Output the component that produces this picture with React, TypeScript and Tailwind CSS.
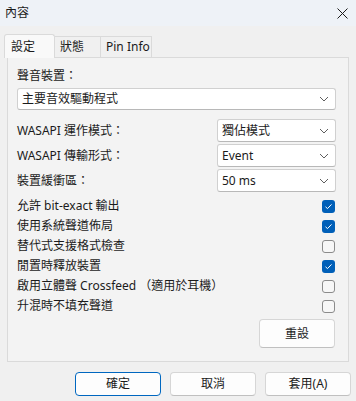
import React, { useState } from "react";

const fontStack = "font-['Noto_Sans','Noto_Sans_CJK_TC',sans-serif]";

const Chevron = () => (
  <svg width="10" height="6" viewBox="0 0 10 6" className="shrink-0">
    <path d="M1 1 L5 5 L9 1" fill="none" stroke="#5f5f5f" strokeWidth="1" />
  </svg>
);

const Select = ({ value, className }: { value: string; className?: string }) => (
  <div
    className={`flex items-center justify-between bg-white border border-[#d0d0d0] border-b-[#b8b8b8] rounded-[3px] pl-[4px] pr-[6px] ${className ?? ""}`}
  >
    <span className="text-[12px] leading-[16px] text-[#1b1b1b]">{value}</span>
    <Chevron />
  </div>
);

const Checkbox = ({ checked }: { checked: boolean }) =>
  checked ? (
    <div className="w-[13px] h-[13px] rounded-[3px] bg-[#005fb8] flex items-center justify-center">
      <svg width="9" height="7" viewBox="0 0 9 7">
        <path d="M1.5 3.8 L3.5 5.6 L7.5 1.4" fill="none" stroke="#ffffff" strokeWidth="1" />
      </svg>
    </div>
  ) : (
    <div className="w-[13px] h-[13px] rounded-[3px] border border-[#8b8b8b] bg-[#f7f7f7]" />
  );

const options = [
  { label: "允許 bit-exact 輸出", checked: true },
  { label: "使用系統聲道佈局", checked: true },
  { label: "替代式支援格式檢查", checked: false },
  { label: "閒置時釋放裝置", checked: true },
  { label: "啟用立體聲 Crossfeed （適用於耳機）", checked: false },
  { label: "升混時不填充聲道", checked: false },
];

const App: React.FC = () => {
  const [tab] = useState("設定");
  const tabs = [
    { name: "設定", w: "w-[51px]" },
    { name: "狀態", w: "w-[46px]" },
    { name: "Pin Info", w: "w-[51px]" },
  ];

  return (
    <div className={`w-[356px] h-[401px] bg-[#f0f0f0] text-[#1b1b1b] overflow-hidden ${fontStack}`}>
      {/* title bar */}
      <div className="h-[26px] bg-[#eef2f7] flex items-center justify-between pl-[5px] pr-[8px]">
        <span className="text-[12px] leading-[16px]">內容</span>
        <svg width="11" height="11" viewBox="0 0 11 11">
          <path d="M0.5 0.5 L10.5 10.5 M10.5 0.5 L0.5 10.5" stroke="#1b1b1b" strokeWidth="1" />
        </svg>
      </div>

      {/* tabs */}
      <div className="flex items-end pl-[4px] mt-[8px] h-[23px]">
        {tabs.map((t) =>
          t.name === tab ? (
            <div
              key={t.name}
              className={`${t.w} h-[24px] -mb-[1px] relative z-10 bg-[#f9f9f9] border border-b-0 border-[#dadada] rounded-t-[3px] flex items-center pl-[6px] text-[12px] leading-[16px]`}
            >
              {t.name}
            </div>
          ) : (
            <div
              key={t.name}
              className={`${t.w} h-[21px] bg-[#f0f0f0] border border-b-0 border-l-0 border-[#dadada] flex items-center pl-[5px] text-[12px] leading-[16px]`}
            >
              {t.name}
            </div>
          )
        )}
      </div>

      {/* panel */}
      <div className="ml-[7px] w-[342px] h-[305px] border border-[#dadada] bg-[#f3f3f3] pl-[9px] pr-[12px] pt-[10px]">
        <div className="text-[12px] leading-[16px]">聲音裝置：</div>
        <Select value="主要音效驅動程式" className="mt-[4px] h-[22px]" />

        <div className="mt-[9px] flex flex-col gap-[2px]">
          {[
            { label: "WASAPI 運作模式：", value: "獨佔模式" },
            { label: "WASAPI 傳輸形式：", value: "Event" },
            { label: "裝置緩衝區：", value: "50 ms" },
          ].map((row) => (
            <div key={row.label} className="flex items-center justify-between h-[23px]">
              <span className="text-[12px] leading-[16px]">{row.label}</span>
              <Select value={row.value} className="w-[119px] h-[23px]" />
            </div>
          ))}
        </div>

        <div className="mt-[4px] flex flex-col">
          {options.map((o) => (
            <div key={o.label} className="flex items-center justify-between h-[20px] pr-[1px]">
              <span className="text-[12px] leading-[16px]">{o.label}</span>
              <Checkbox checked={o.checked} />
            </div>
          ))}
        </div>

        <div className="mt-[3px] flex justify-end pr-[1px]">
          <button className="w-[76px] h-[29px] bg-[#fdfdfd] border border-[#d6d6d6] border-b-[#c0c0c0] rounded-[4px] text-[12px] leading-[16px]">
            重設
          </button>
        </div>
      </div>

      {/* dialog buttons */}
      <div className="mt-[10px] flex justify-end gap-[9px] pr-[5px]">
        <button className="w-[86px] h-[24px] bg-[#fdfdfd] border border-[#0067c0] rounded-[4px] text-[12px] leading-[16px]">
          確定
        </button>
        <button className="w-[86px] h-[24px] bg-[#fdfdfd] border border-[#d6d6d6] border-b-[#c0c0c0] rounded-[4px] text-[12px] leading-[16px]">
          取消
        </button>
        <button className="w-[86px] h-[24px] bg-[#fdfdfd] border border-[#d6d6d6] border-b-[#c0c0c0] rounded-[4px] text-[12px] leading-[16px]">
          套用(A)
        </button>
      </div>
    </div>
  );
};

export default App;
